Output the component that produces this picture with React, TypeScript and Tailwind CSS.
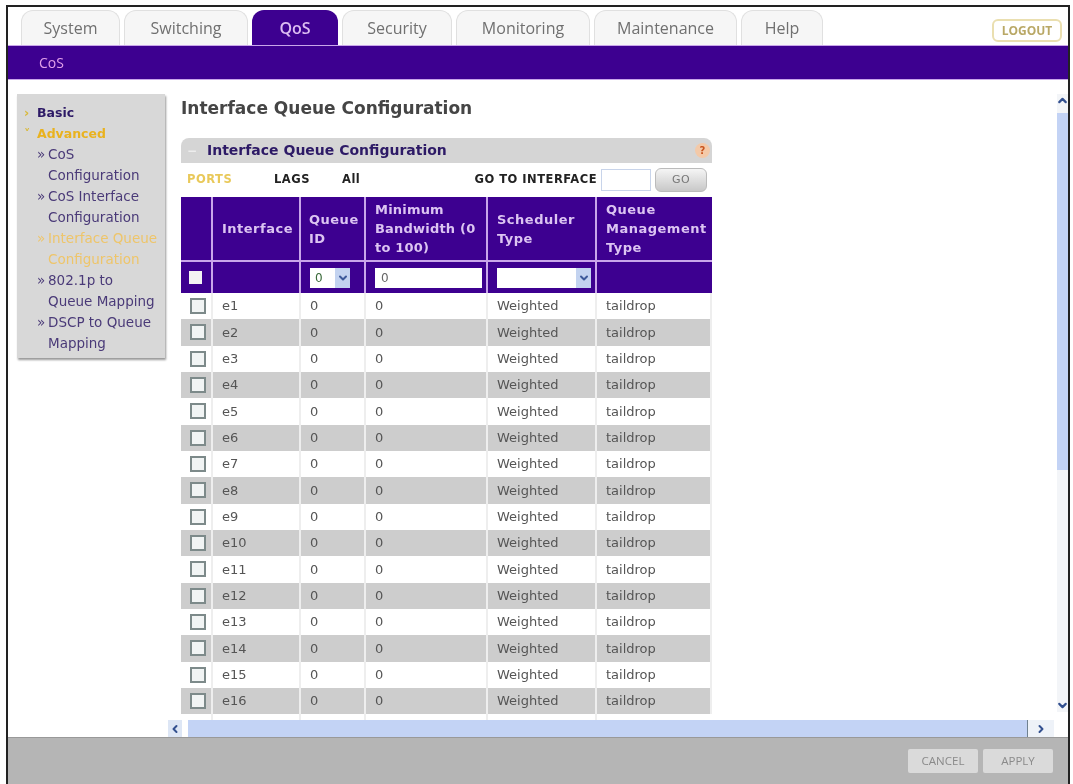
import { ChevronDown, ChevronLeft, ChevronRight, ChevronUp } from "lucide-react";

const tabs = [
  { name: "System", w: "w-[99px]" },
  { name: "Switching", w: "w-[124px]" },
  { name: "QoS", w: "w-[86px]" },
  { name: "Security", w: "w-[110px]" },
  { name: "Monitoring", w: "w-[134px]" },
  { name: "Maintenance", w: "w-[143px]" },
  { name: "Help", w: "w-[82px]" },
];

const menu = [
  { label: "CoS", second: "Configuration" },
  { label: "CoS Interface", second: "Configuration" },
  { label: "Interface Queue", second: "Configuration", active: true },
  { label: "802.1p to", second: "Queue Mapping" },
  { label: "DSCP to Queue", second: "Mapping" },
];

const rows = Array.from({ length: 16 }, (_, i) => `e${i + 1}`);

function Checkbox() {
  return <div className="w-[16px] h-[16px] border-2 border-[#7d8a8a] bg-[#f1f4f4]" />;
}

export default function App() {
  return (
    <div className="w-[1073px] h-[784px] bg-white pt-[5px] pl-[6px] pr-[3px] overflow-hidden blur-[0.6px] font-['DejaVu_Sans',sans-serif] text-[#333]">
      <div className="h-[779px] border-2 border-b-0 border-[#222] flex flex-col bg-white">
        {/* top tabs */}
        <div className="h-[38px] shrink-0 flex items-end pl-[13px] pr-[6px] gap-[4px] font-['Open_Sans',sans-serif] text-[16px]">
          {tabs.map((t) =>
            t.name === "QoS" ? (
              <div key={t.name} className={`${t.w} h-[35px] rounded-t-[12px] bg-[#3d0090] text-[#dcbcf2] font-semibold flex items-center justify-center`}>
                {t.name}
              </div>
            ) : (
              <div key={t.name} className={`${t.w} h-[35px] rounded-t-[12px] border border-b-0 border-[#e0e0e0] bg-[#f6f6f6] text-[#707070] font-medium flex items-center justify-center`}>
                {t.name}
              </div>
            )
          )}
          <div className="ml-auto mb-[3px] w-[70px] h-[23px] rounded-[6px] border-2 border-[#eadfb0] text-[#b9a866] text-[12px] font-bold flex items-center justify-center">
            LOGOUT
          </div>
        </div>
        <div className="h-[35px] shrink-0 bg-[#3d0090] border-t border-b border-[#c9a6ea] flex items-center pl-[31px] text-[14px] text-[#e2a0ea] font-['Open_Sans',sans-serif]">
          CoS
        </div>

        {/* body */}
        <div className="flex-1 min-h-0 flex relative">
          <div className="w-[157px] shrink-0 pl-[9px] pt-[14px]">
            <div className="w-[148px] h-[264px] bg-[#d8d8d8] shadow-[1px_2px_2px_#999] pt-[8px] text-[13.5px] leading-[21px] text-[#4a3a78]">
              <div className="pl-[7px] flex text-[12.5px]">
                <span className="w-[13px] text-[#d8b93a] font-bold">›</span>
                <span className="font-bold text-[#2d1a66]">Basic</span>
              </div>
              <div className="pl-[7px] flex text-[12.5px]">
                <span className="w-[13px] text-[#d8b93a] font-bold">˅</span>
                <span className="font-bold text-[#e9b21f]">Advanced</span>
              </div>
              {menu.map((m) => (
                <div key={m.label} className={m.active ? "text-[#eec56a]" : ""}>
                  <div className="pl-[20px] flex whitespace-nowrap">
                    <span className="w-[11px]">»</span>
                    {m.label}
                  </div>
                  <div className="pl-[31px] whitespace-nowrap">{m.second}</div>
                </div>
              ))}
            </div>
          </div>

          <div className="flex-1 min-w-0 flex flex-col">
            <div className="flex-1 min-h-0 overflow-hidden pl-[16px] pt-[15px]">
              <div className="text-[17px] leading-[26px] text-[#454545] font-bold h-[43px] whitespace-nowrap">
                Interface Queue Configuration
              </div>
              <div className="w-[531px]">
                <div className="h-[25px] rounded-t-[8px] bg-[#d5d5d5] flex items-center pl-[6px] pr-[2px]">
                  <span className="w-[20px] text-[#eeeeee] text-[12px] font-bold">−</span>
                  <span className="text-[14px] font-bold text-[#2d1a66]">Interface Queue Configuration</span>
                  <span className="ml-auto w-[15px] h-[15px] rounded-full bg-[#f3c9a8] text-[#c9541e] text-[10px] font-bold flex items-center justify-center">?</span>
                </div>
                <div className="h-[34px] flex items-center pl-[6px] pr-[5px] text-[11.5px] tracking-[0.5px] font-bold text-[#222]">
                  <span className="w-[87px] text-[#e9c95a]">PORTS</span>
                  <span className="w-[68px]">LAGS</span>
                  <span>All</span>
                  <span className="ml-auto whitespace-nowrap">GO TO INTERFACE</span>
                  <div className="w-[50px] h-[22px] ml-[4px] border border-[#c8d4ea] bg-white" />
                  <div className="w-[52px] h-[24px] ml-[4px] rounded-[6px] border border-[#bbb] bg-gradient-to-b from-[#f5f5f5] to-[#c8c8c8] text-[#777] font-normal text-[11px] flex items-center justify-center">
                    GO
                  </div>
                </div>
                <div className="grid grid-cols-[32px_88px_65px_122px_109px_115px]">
                  <div className="contents font-bold text-[13px] leading-[19px] tracking-[0.5px] text-[#dcc4f2]">
                    <div className="h-[65px] bg-[#3d0090] border-r-2 border-b-2 border-[#c9a6ea]" />
                    <div className="h-[65px] bg-[#3d0090] border-r-2 border-b-2 border-[#c9a6ea] pl-[9px] flex items-center whitespace-nowrap">Interface</div>
                    <div className="h-[65px] bg-[#3d0090] border-r-2 border-b-2 border-[#c9a6ea] pl-[8px] flex items-center">Queue<br />ID</div>
                    <div className="h-[65px] bg-[#3d0090] border-r-2 border-b-2 border-[#c9a6ea] pl-[9px] tracking-[0.2px] flex items-center whitespace-nowrap">
                      <span>Minimum<br />Bandwidth (0<br />to 100)</span>
                    </div>
                    <div className="h-[65px] bg-[#3d0090] border-r-2 border-b-2 border-[#c9a6ea] pl-[9px] flex items-center">
                      <span>Scheduler<br />Type</span>
                    </div>
                    <div className="h-[65px] bg-[#3d0090] border-b-2 border-[#c9a6ea] pl-[9px] flex items-center">
                      <span>Queue<br />Management<br />Type</span>
                    </div>
                  </div>

                  <div className="h-[31px] bg-[#3d0090] border-r-2 border-[#c9a6ea] flex items-center pl-[8px]">
                    <div className="w-[13px] h-[13px] bg-[#f3f3f3]" />
                  </div>
                  <div className="h-[31px] bg-[#3d0090] border-r-2 border-[#c9a6ea]" />
                  <div className="h-[31px] bg-[#3d0090] border-r-2 border-[#c9a6ea] flex items-center pl-[9px]">
                    <div className="w-[40px] h-[20px] bg-white flex items-center text-[12px] text-[#3a6a3a] pl-[5px]">
                      <span className="flex-1">0</span>
                      <div className="w-[15px] h-full bg-[#c3d3f0] flex items-center justify-center">
                        <ChevronDown size={12} strokeWidth={4} className="text-[#3d5a9a]" />
                      </div>
                    </div>
                  </div>
                  <div className="h-[31px] bg-[#3d0090] border-r-2 border-[#c9a6ea] flex items-center pl-[9px]">
                    <div className="w-[107px] h-[20px] bg-white text-[12px] text-[#666] pl-[6px] leading-[20px]">0</div>
                  </div>
                  <div className="h-[31px] bg-[#3d0090] border-r-2 border-[#c9a6ea] flex items-center pl-[9px]">
                    <div className="w-[94px] h-[20px] bg-white flex justify-end">
                      <div className="w-[15px] h-full bg-[#c3d3f0] flex items-center justify-center">
                        <ChevronDown size={12} strokeWidth={4} className="text-[#3d5a9a]" />
                      </div>
                    </div>
                  </div>
                  <div className="h-[31px] bg-[#3d0090]" />

                  {rows.map((r, i) => {
                    const bg = i % 2 === 1 ? "bg-[#cdcdcd]" : "bg-white";
                    const cell = `h-[26.33px] ${bg} border-r-2 border-[#eeeeee] flex items-center pl-[9px] text-[13px] text-[#555]`;
                    return (
                      <div key={r} className="contents">
                        <div className={`${cell} pl-[6px]`}><Checkbox /></div>
                        <div className={cell}>{r}</div>
                        <div className={cell}>0</div>
                        <div className={cell}>0</div>
                        <div className={cell}>Weighted</div>
                        <div className={`${cell} border-r-0`}>taildrop</div>
                      </div>
                    );
                  })}
                  <div className="h-[12px] border-r-2 border-[#eeeeee]" />
                  <div className="h-[12px] border-r-2 border-[#eeeeee]" />
                  <div className="h-[12px] border-r-2 border-[#eeeeee]" />
                  <div className="h-[12px] border-r-2 border-[#eeeeee]" />
                  <div className="h-[12px] border-r-2 border-[#eeeeee]" />
                  <div className="h-[12px]" />
                </div>
              </div>
            </div>

            {/* horizontal scrollbar */}
            <div className="h-[17px] shrink-0 flex items-center pl-[3px] pr-[14px]">
              <div className="w-[14px] h-[17px] bg-[#dde6f5] flex items-center justify-center">
                <ChevronLeft size={12} strokeWidth={4} className="text-[#33508f]" />
              </div>
              <div className="flex-1 h-[17px] ml-[6px] bg-[#c3d3f5] border-r border-[#6f8190]" />
              <div className="w-[26px] h-[17px] bg-[#eef2f8] flex items-center justify-center">
                <ChevronRight size={12} strokeWidth={4} className="text-[#33508f]" />
              </div>
            </div>
          </div>

          {/* vertical scrollbar */}
          <div className="absolute right-0 top-[14px] w-[11px] h-[618px] bg-[#f3f5f8] flex flex-col">
            <ChevronUp size={13} strokeWidth={4} className="text-[#33508f] shrink-0 -ml-[1px]" />
            <div className="h-[357px] bg-[#c3d3f5] mt-[6px]" />
            <div className="flex-1" />
            <ChevronDown size={13} strokeWidth={4} className="text-[#33508f] shrink-0 -ml-[1px]" />
          </div>
        </div>

        {/* footer */}
        <div className="h-[47px] shrink-0 bg-[#b5b5b5] border-t border-[#999] flex items-center justify-end gap-[5px] pr-[15px] font-['Open_Sans',sans-serif] text-[11.5px] text-[#8a8a8a]">
          <div className="w-[70px] h-[24px] bg-[#dadada] rounded-[2px] flex items-center justify-center">CANCEL</div>
          <div className="w-[70px] h-[24px] bg-[#dadada] rounded-[2px] flex items-center justify-center">APPLY</div>
        </div>
      </div>
    </div>
  );
}
